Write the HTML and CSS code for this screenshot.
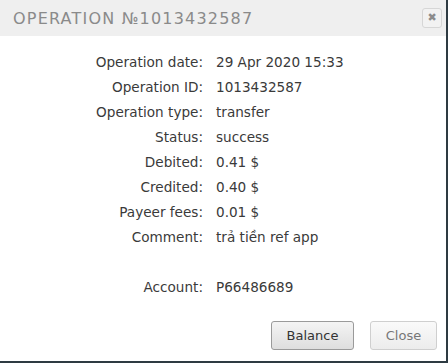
FILE: index.html
```html
<!DOCTYPE html>
<html lang="en">
<head>
<meta charset="UTF-8" />
<meta name="viewport" content="width=device-width, initial-scale=1" />
<link rel="stylesheet" href="styles.css">
</head>
<body>

<div class="dialog" role="dialog" aria-labelledby="dlgTitle">
  <div class="dialog-head">
    <div id="dlgTitle" class="dialog-title">Operation №1013432587</div>
    <button class="head-close" title="Close" aria-label="Close">&#10006;</button>
  </div>

  <div class="dialog-body">
    <div class="details">
      <div class="label">Operation date:</div><div class="value">29 Apr 2020 15:33</div>
      <div class="label">Operation ID:</div><div class="value">1013432587</div>
      <div class="label">Operation type:</div><div class="value">transfer</div>
      <div class="label">Status:</div><div class="value">success</div>
      <div class="label">Debited:</div><div class="value">0.41 $</div>
      <div class="label">Credited:</div><div class="value">0.40 $</div>
      <div class="label">Payeer fees:</div><div class="value">0.01 $</div>
      <div class="label">Comment:</div><div class="value">trả tiền ref app</div>
      <div class="spacer"></div>
      <div class="label">Account:</div><div class="value">P66486689</div>
    </div>
  </div>

  <div class="dialog-foot">
    <button class="btn btn-main">Balance</button>
    <button class="btn btn-light">Close</button>
  </div>
</div>

</body>
</html>
```

FILE: styles.css
```css
body {
  margin: 0;
  background: #2e3b42;
  font-family: "DejaVu Sans", "Noto Sans", sans-serif;
  color: #3a3a3a;
}

.dialog {
  width: 446px;
  height: 361px;
  background: #fff;
  display: flex;
  flex-direction: column;
}

.dialog-head {
  height: 36px;
  background: #efefef;
  display: flex;
  align-items: center;
  justify-content: space-between;
  padding: 0 4px 0 13px;
}

.dialog-title {
  font-size: 16px;
  text-transform: uppercase;
  letter-spacing: 1.2px;
  color: #8a8a8a;
}

.head-close {
  width: 20px;
  height: 20px;
  padding: 0;
  border: 1px solid #d6d6d6;
  border-radius: 3px;
  background: #f2f2f2;
  color: #8c8c8c;
  font-size: 11px;
  line-height: 18px;
  font-family: "DejaVu Sans", sans-serif;
  cursor: pointer;
}

.dialog-body {
  flex-grow: 1;
  padding-top: 13px;
}

.details {
  display: grid;
  grid-template-columns: 203px 1fr;
  column-gap: 13px;
  grid-auto-rows: 25px;
  align-items: center;
  font-size: 13.6px;
}

.label {
  text-align: right;
}

.spacer {
  grid-column: 1 / 3;
}

.dialog-foot {
  display: flex;
  justify-content: flex-end;
  gap: 16px;
  padding: 0 9px 11px 0;
}

.btn {
  height: 29px;
  padding: 0 12px;
  font-family: "DejaVu Sans", Verdana, sans-serif;
  font-size: 13px;
  border-radius: 3px;
  cursor: pointer;
}

.btn-main {
  width: 83px;
  color: #333;
  border: 1px solid #9a9a9a;
  background: linear-gradient(#f4f4f4, #dedede);
}

.btn-light {
  width: 67px;
  color: #777;
  border: 1px solid #cfcfcf;
  background: linear-gradient(#fafafa, #ececec);
}
```
